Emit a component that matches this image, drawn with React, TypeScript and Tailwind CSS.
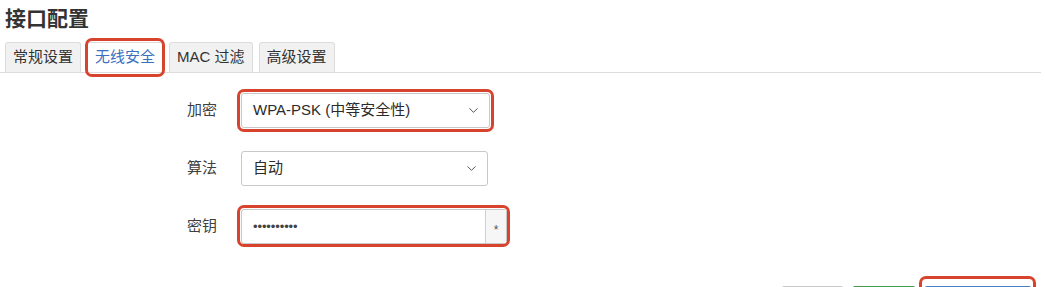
import { ChevronDown } from "lucide-react";

const tabs = ["常规设置", "无线安全", "MAC 过滤", "高级设置"];

function Mark({ className }: { className: string }) {
  return <div className={`pointer-events-none absolute rounded-[7px] border-[3px] border-[#d8432e] ${className}`} />;
}

function Select({ value, width }: { value: string; width: string }) {
  return (
    <div className={`flex h-[35px] ${width} items-center justify-between rounded-[3px] border border-[#c8c8c8] bg-white pl-[11px] pr-[8px] text-[15px] text-[#2b2b2b]`}>
      <span>{value}</span>
      <ChevronDown size={15} strokeWidth={1.6} className="text-[#555]" />
    </div>
  );
}

export default function App() {
  return (
    <div className="min-h-[340px] w-[1045px] bg-white text-[#333]" style={{ fontFamily: '"Liberation Sans", "Noto Sans CJK SC", sans-serif' }}>
      <h2 className="px-[5px] pt-[5px] text-[21px] font-bold leading-[28px] text-[#333]">接口配置</h2>

      <div className="mr-[4px] mt-[9px] flex gap-[6px] border-b border-[#dcdcdc] px-[5px]">
        {tabs.map((t, i) => (
          <div
            key={t}
            className={`relative flex h-[30px] items-center rounded-t-[3px] border border-b-0 border-[#dcdcdc] px-[7px] text-[15px] ${
              i === 1 ? "bg-white text-[#3a70bf]" : "bg-[#f1f1f1] text-[#333]"
            }`}
          >
            {t}
            {i === 1 && <Mark className="-bottom-[5px] -left-[3px] -right-[3px] -top-[5px]" />}
          </div>
        ))}
      </div>

      <div className="mt-[20px] flex flex-col gap-[23px]">
        <div className="flex items-center gap-[24px]">
          <div className="w-[217px] text-right text-[15px] text-[#404040]">加密</div>
          <div className="relative">
            <Select value="WPA-PSK (中等安全性)" width="w-[249px]" />
            <Mark className="-inset-[4px]" />
          </div>
        </div>

        <div className="flex items-center gap-[24px]">
          <div className="w-[217px] text-right text-[15px] text-[#404040]">算法</div>
          <Select value="自动" width="w-[247px]" />
        </div>

        <div className="flex items-center gap-[24px]">
          <div className="w-[217px] text-right text-[15px] text-[#404040]">密钥</div>
          <div className="relative flex h-[35px] w-[266px] rounded-[3px] border border-[#c8c8c8] bg-white">
            <div className="flex flex-1 items-center pl-[11px] text-[13px] tracking-[-0.1px] text-[#444]">••••••••••</div>
            <div className="flex w-[21px] items-center justify-center border-l border-[#d0d0d0] bg-[#f6f6f6] pt-[6px] text-[12px] text-[#555]">*</div>
            <Mark className="-bottom-[4px] -left-[5px] -right-[4px] -top-[5px]" />
          </div>
        </div>
      </div>

      {/* action buttons, only their top edge is inside the frame */}
      <div className="mt-[42px] flex justify-end gap-[8px] pr-[13px]">
        <div className="h-[30px] w-[63px] rounded-[3px] border border-[#c8c8c8] bg-white" />
        <div className="h-[30px] w-[64px] rounded-[3px] border border-[#45a049] bg-[#4cae50]" />
        <div className="relative">
          <div className="h-[30px] w-[108px] rounded-[3px] border border-[#4a7fc4] bg-[#f4f8fd]" />
          <Mark className="-bottom-[4px] -left-[5px] -right-[4px] -top-[10px]" />
        </div>
      </div>
    </div>
  );
}
